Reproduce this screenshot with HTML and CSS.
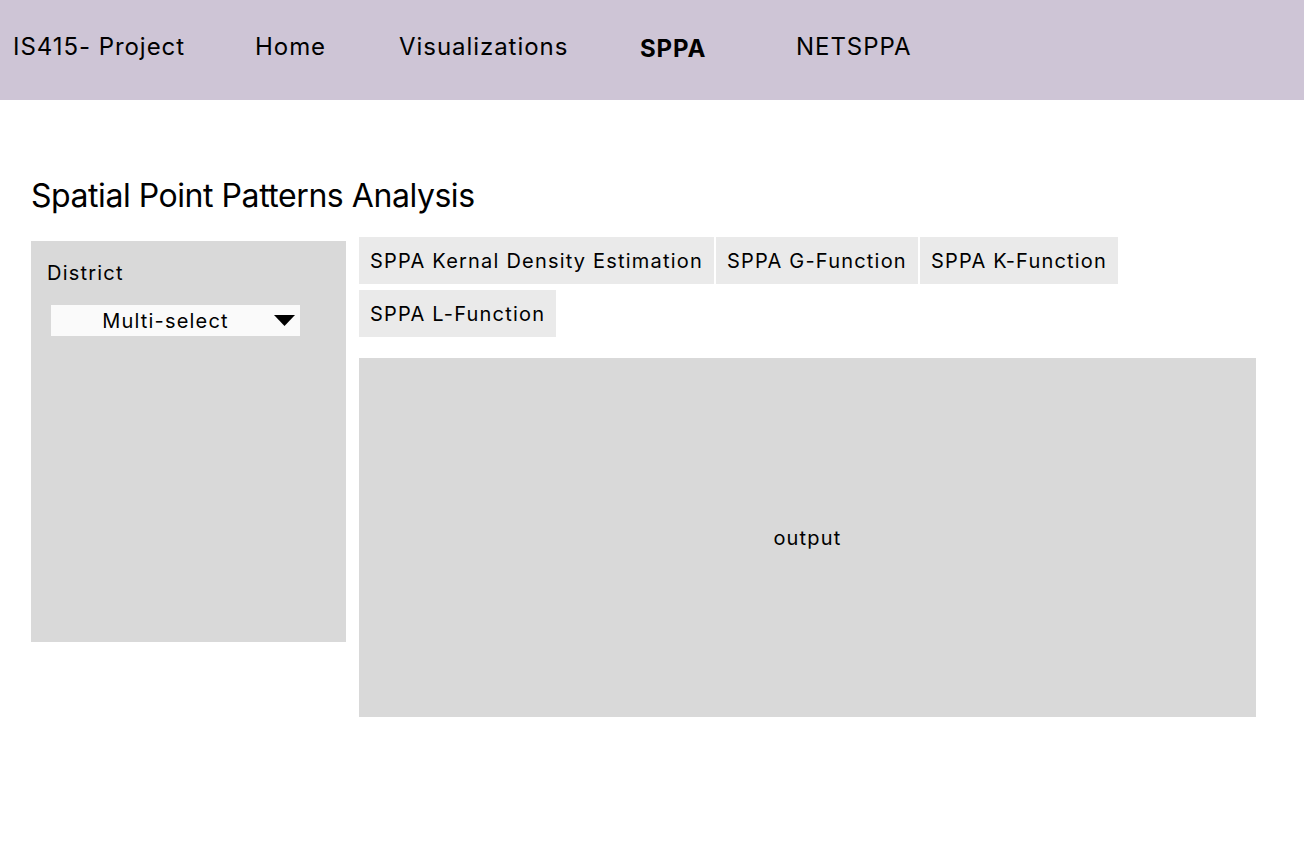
FILE: index.html
```html
<!DOCTYPE html>
<html lang="en">
<head>
<meta charset="utf-8">
<title>SPPA</title>
<link rel="stylesheet" href="styles.css">
</head>
<body>
<header class="topbar">
  <nav class="nav">
    <a class="nav-item">IS415- Project</a>
    <a class="nav-item">Home</a>
    <a class="nav-item">Visualizations</a>
    <a class="nav-item active">SPPA</a>
    <a class="nav-item">NETSPPA</a>
  </nav>
</header>
<main class="page">
  <h1 class="title">Spatial Point Patterns Analysis</h1>
  <div class="content">
    <aside class="sidebar">
      <div class="label">District</div>
      <div class="select">
        <span class="select-text">Multi-select</span>
        <svg class="caret" width="21" height="11" viewBox="0 0 21 11"><polygon points="0,0 21,0 10.5,11" fill="#000"/></svg>
      </div>
    </aside>
    <section class="main">
      <div class="tabs">
        <div class="tab">SPPA Kernal Density Estimation</div>
        <div class="tab">SPPA G-Function</div>
        <div class="tab">SPPA K-Function</div>
        <div class="tab">SPPA L-Function</div>
      </div>
      <div class="output">output</div>
    </section>
  </div>
</main>
</body>
</html>
```
FILE: styles.css
```css
* { box-sizing: border-box; }
html, body { margin: 0; padding: 0; }
body {
  font-family: Inter, "Noto Sans", "Liberation Sans", sans-serif;
  color: #000;
  background: #fff;
  width: 1304px;
  height: 844px;
}
.topbar {
  height: 100px;
  background: #cec5d6;
  padding: 32px 0 0 13px;
}
.nav {
  display: grid;
  grid-template-columns: 242px 144px 241px 156px auto;
  font-size: 24px;
  line-height: 29px;
  letter-spacing: 0.95px;
}
.nav-item { color: #000; text-decoration: none; white-space: nowrap; }
.nav-item.active { font-weight: 700; padding-top: 2px; letter-spacing: 0.9px; }
.page { padding: 76px 0 0 31px; }
.title {
  margin: 0;
  font-size: 32px;
  font-weight: 400;
  line-height: 39px;
  letter-spacing: -0.45px;
}
.content {
  display: flex;
  align-items: flex-start;
  gap: 13px;
  margin-top: 22px;
}
.sidebar {
  width: 315px;
  height: 401px;
  margin-top: 4px;
  background: #d9d9d9;
  padding: 20px 0 0 16px;
}
.label { font-size: 20px; line-height: 24px; letter-spacing: 1.2px; }
.select {
  margin: 20px 0 0 4px;
  width: 249px;
  height: 31px;
  background: #fafafa;
  display: flex;
  align-items: center;
  font-size: 20px;
  line-height: 24px;
  letter-spacing: 1.2px;
  padding: 0 5px 0 0;
}
.select-text { flex: 1; text-align: center; padding-left: 6px; }
.caret { display: block; }
.main { width: 897px; }
.tabs {
  display: flex;
  flex-wrap: wrap;
  column-gap: 2px;
  row-gap: 6px;
}
.tab {
  height: 47px;
  display: flex;
  align-items: center;
  padding: 0 11px;
  background: #eaeaea;
  font-size: 20px;
  line-height: 24px;
  letter-spacing: 1.2px;
  white-space: nowrap;
}
.output {
  margin-top: 21px;
  height: 359px;
  background: #d9d9d9;
  display: flex;
  align-items: center;
  justify-content: center;
  font-size: 20px;
  line-height: 24px;
  letter-spacing: 1.2px;
}
```
